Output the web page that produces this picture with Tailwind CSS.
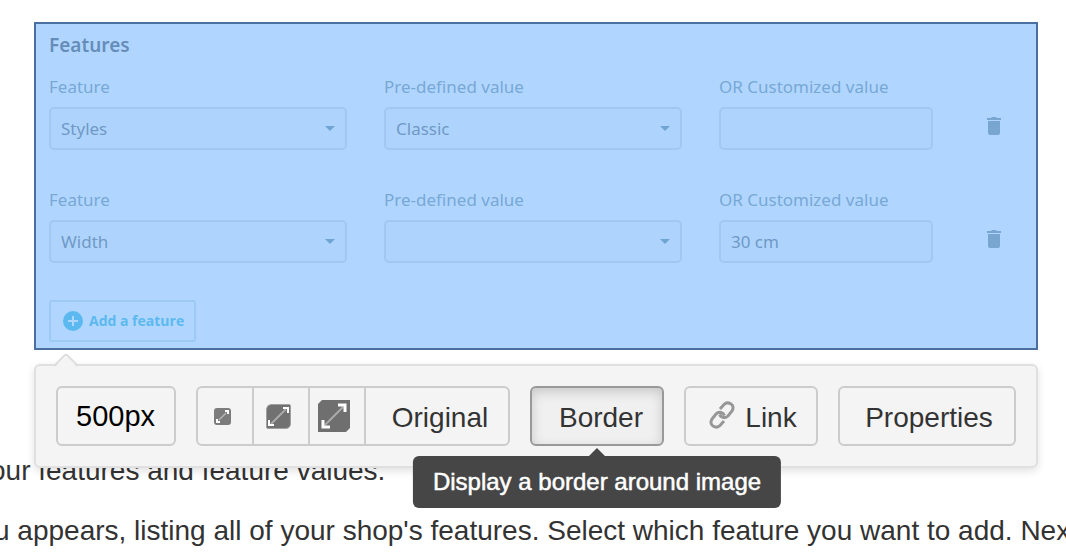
<!DOCTYPE html>
<html lang="en">
<head>
<meta charset="utf-8">
<meta name="viewport" content="width=device-width, initial-scale=1">
<title>Product features</title>
<script src="https://cdn.jsdelivr.net/npm/@tailwindcss/browser@4"></script>
</head>
<body class="overflow-hidden bg-white font-['Liberation_Sans',Arial,sans-serif] text-[28px] leading-10 text-[#333]">
<main class="pt-[22px]">
  <div class="relative mr-7 ml-[34px]">
    <!-- Selected widget -->
    <form class="border-2 border-[#4a709f] bg-[#b0d6ff] pr-3 pl-[13px] pt-[9px] pb-1.5 font-['Noto_Sans',sans-serif] text-[17px] leading-6 text-[#78a8d5]">
      <h2 class="text-[19px] font-semibold text-[#668db9]">Features</h2>
      <div class="mt-[18px] grid grid-cols-[298fr_298fr_214fr_54fr] gap-x-[37px] gap-y-[38px]">
        <div>
          <label for="f1" class="block">Feature</label>
          <div class="relative mt-2">
            <select id="f1" class="block h-[43px] w-full appearance-none rounded-[5px] border-2 border-[#a0c8f2] bg-[#aed4fd] px-2.5 text-[#7099c6]"><option>Styles</option></select>
            <svg class="pointer-events-none absolute top-[19px] right-3 h-[5px] w-2.5" viewBox="0 0 10 5" fill="#70a4d2"><path d="M0 0h10L5 5z"/></svg>
          </div>
        </div>
        <div>
          <label for="p1" class="block">Pre-defined value</label>
          <div class="relative mt-2">
            <select id="p1" class="block h-[43px] w-full appearance-none rounded-[5px] border-2 border-[#a0c8f2] bg-[#aed4fd] px-2.5 text-[#7099c6]"><option>Classic</option></select>
            <svg class="pointer-events-none absolute top-[19px] right-3 h-[5px] w-2.5" viewBox="0 0 10 5" fill="#70a4d2"><path d="M0 0h10L5 5z"/></svg>
          </div>
        </div>
        <div>
          <label for="c1" class="block whitespace-nowrap">OR Customized value</label>
          <input id="c1" type="text" class="mt-2 block h-[43px] w-full rounded-[5px] border-2 border-[#a0c8f2] bg-[#aed4fd] px-2.5 text-[#7099c6]">
        </div>
        <button type="button" aria-label="Delete feature" class="mt-[41px] ml-4 self-start"><svg class="h-5 w-4" viewBox="0 0 16 20" fill="#78a6d1"><path d="M1 2h4l1-1h4l1 1h4v2H1zM2 5h12v12a2 2 0 0 1-2 2H4a2 2 0 0 1-2-2z"/></svg></button>
        <div>
          <label for="f2" class="block">Feature</label>
          <div class="relative mt-2">
            <select id="f2" class="block h-[43px] w-full appearance-none rounded-[5px] border-2 border-[#a0c8f2] bg-[#aed4fd] px-2.5 text-[#7099c6]"><option>Width</option></select>
            <svg class="pointer-events-none absolute top-[19px] right-3 h-[5px] w-2.5" viewBox="0 0 10 5" fill="#70a4d2"><path d="M0 0h10L5 5z"/></svg>
          </div>
        </div>
        <div>
          <label for="p2" class="block">Pre-defined value</label>
          <div class="relative mt-2">
            <select id="p2" class="block h-[43px] w-full appearance-none rounded-[5px] border-2 border-[#a0c8f2] bg-[#aed4fd] px-2.5 text-[#7099c6]"><option></option></select>
            <svg class="pointer-events-none absolute top-[19px] right-3 h-[5px] w-2.5" viewBox="0 0 10 5" fill="#70a4d2"><path d="M0 0h10L5 5z"/></svg>
          </div>
        </div>
        <div>
          <label for="c2" class="block whitespace-nowrap">OR Customized value</label>
          <input id="c2" type="text" value="30 cm" class="mt-2 block h-[43px] w-full rounded-[5px] border-2 border-[#a0c8f2] bg-[#aed4fd] px-2.5 text-[#7099c6]">
        </div>
        <button type="button" aria-label="Delete feature" class="mt-[41px] ml-4 self-start"><svg class="h-5 w-4" viewBox="0 0 16 20" fill="#78a6d1"><path d="M1 2h4l1-1h4l1 1h4v2H1zM2 5h12v12a2 2 0 0 1-2 2H4a2 2 0 0 1-2-2z"/></svg></button>
      </div>
      <button type="button" class="mt-[37px] flex h-[42px] items-center gap-1.5 rounded-[3px] border-2 border-[#9dc9f4] pr-2.5 pl-3 font-['Open_Sans',sans-serif] text-[14px] font-bold text-[#5bb9f0]">
        <svg class="size-5" viewBox="0 0 20 20"><circle cx="10" cy="10" r="10" fill="#5bb9f0"/><path d="M10 5v10M5 10h10" stroke="#b0d6ff" stroke-width="2"/></svg>
        Add a feature
      </button>
    </form>

    <!-- Image toolbar floating over the article -->
    <div role="toolbar" aria-label="Image" class="absolute inset-x-0 top-full z-10 mt-3.5 flex gap-5 rounded-md border-2 border-[#e0e0e0] bg-[#f4f4f4] p-5 shadow-[0_3px_8px_rgba(0,0,0,0.12)]">
      <svg class="absolute -top-3 left-[18px] h-3.5 w-6" viewBox="0 0 24 14"><path d="M0 14 12 2l12 12z" fill="#f4f4f4"/><path d="M0 12 11 1h2l11 11" fill="none" stroke="#dedede" stroke-width="2"/></svg>
      <input type="text" value="500px" aria-label="Image width" class="h-[60px] w-[120px] rounded-md border-2 border-[#ccc] px-[18px] text-[29px] text-black">
      <div class="flex h-[60px] grow basis-[314px] divide-x-2 divide-[#ccc] rounded-md border-2 border-[#ccc]">
        <button type="button" aria-label="Small" class="flex w-14 items-center justify-center pr-1.5"><svg class="size-[17px]" viewBox="0 0 17 17"><rect width="17" height="17" rx="3" fill="#7c7c7c"/><path d="M5 12 12 5" stroke="#b5b5b5" stroke-width="1.500"/><path d="M11 3h3v3M3 11v3h3" fill="none" stroke="#fff" stroke-width="2"/></svg></button>
        <button type="button" aria-label="Medium" class="flex w-14 items-center justify-center pr-1.5"><svg class="size-[25px]" viewBox="0 0 25 25"><path d="M5 .5h18a1.500 1.500 0 0 1 1.500 1.500v18a5 5 0 0 1-5 4.500H2A1.500 1.500 0 0 1 .5 23V5A5 5 0 0 1 5 .5z" fill="#717171" stroke="#a0a0a0"/><path d="M5 20 20 5" stroke="#aaa" stroke-width="2"/><path d="M17 4h5v5M3 16v5h5" fill="none" stroke="#fff" stroke-width="2"/></svg></button>
        <button type="button" aria-label="Large" class="flex w-14 items-center justify-center pr-1.5"><svg class="size-8" viewBox="0 0 32 32"><path d="M4 0h28v28l-4 4H0V4z" fill="#6f6f6f"/><path d="M7 25 25 7" stroke="#aaa" stroke-width="2"/><path d="M20 5h7v7M5 20v7h7" fill="none" stroke="#fff" stroke-width="3"/></svg></button>
        <button type="button" class="flex-1 pt-1 pl-1.5">Original</button>
      </div>
      <div class="relative flex grow basis-[134px]">
        <button type="button" aria-pressed="true" aria-describedby="tip" class="h-[60px] w-full rounded-md border-2 border-[#999] bg-[#f0f0f0] pt-1 pl-2 shadow-[inset_0_4px_12px_rgba(0,0,0,0.17)]">Border</button>
        <div id="tip" role="tooltip" class="absolute top-[70px] left-1/2 flex h-[52px] -translate-x-1/2 items-center rounded-md bg-[#464646] px-5 text-2xl whitespace-nowrap text-white [-webkit-text-stroke:0.5px_white]">
          <svg class="absolute -top-2 left-1/2 h-2 w-4 -translate-x-1/2" viewBox="0 0 16 8" fill="#464646"><path d="M0 8 8 0l8 8z"/></svg>
          Display a border around image
        </div>
      </div>
      <button type="button" class="flex h-[60px] grow basis-[134px] items-center justify-center gap-2.5 rounded-md border-2 border-[#ccc] pl-1">
        <svg class="-mt-0.5 h-7 w-[26px]" viewBox="0 0 26 28" fill="none" stroke="#979797" stroke-width="3"><path d="M11 8l4-4.500c2-2 4.500-2 7-.5s2.500 4.500 1 7l-4 5c-2 2-4.500 2-7 .5l-1.500-2"/><path d="M15 20l-4 4.500c-2 2-4.500 2-7 .5s-2.500-4.500-1-7l4-5c2-2 4.500-2 7-.5l1.500 2"/></svg>
        <span class="pt-1">Link</span>
      </button>
      <button type="button" class="h-[60px] grow basis-[178px] rounded-md border-2 border-[#ccc] pt-1 pl-1">Properties</button>
    </div>
  </div>

  <article class="mt-[101px] whitespace-nowrap">
    <p class="-ml-2.5">our features and feature values.</p>
    <p class="mt-5 -ml-1.5">u appears, listing all of your shop's features. Select which feature you want to add. Next</p>
  </article>
</main>
</body>
</html>
